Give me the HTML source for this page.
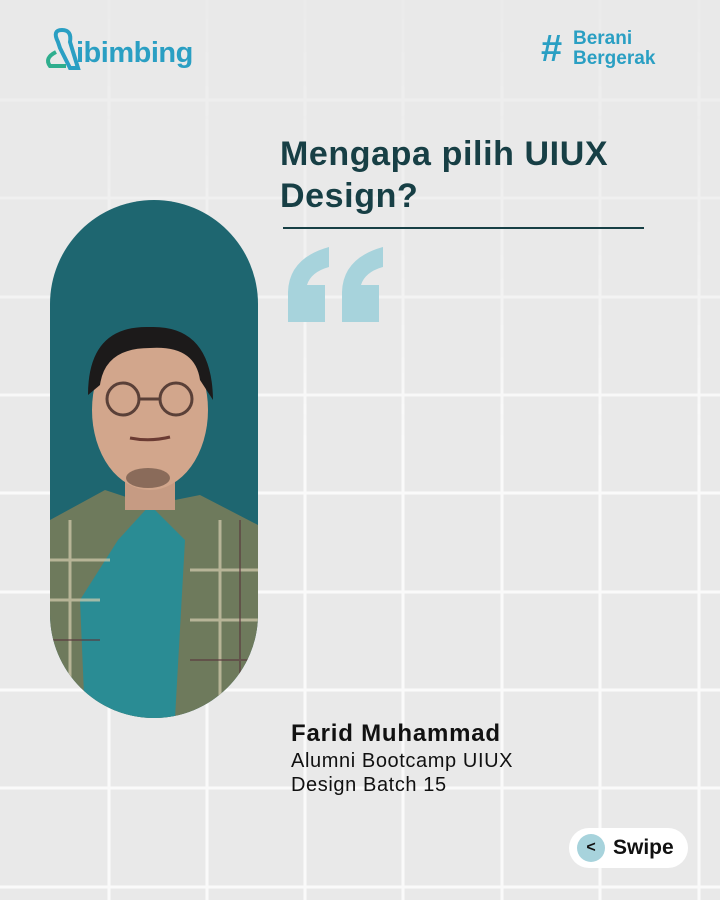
<!DOCTYPE html>
<html><head><meta charset="utf-8"><style>
*{margin:0;padding:0;box-sizing:border-box}
body{width:720px;height:900px;background:#e9e9e9;position:relative;overflow:hidden;font-family:"Liberation Sans",sans-serif}
.abs{position:absolute}
</style></head><body>
<svg class="abs" style="left:0;top:0" width="720" height="900">
<defs><linearGradient id="fade" x1="0" y1="0" x2="0" y2="1"><stop offset="0" stop-color="#fff" stop-opacity="0.15"/><stop offset="0.3" stop-color="#fff" stop-opacity="0.5"/><stop offset="0.5" stop-color="#fff" stop-opacity="1"/></linearGradient>
<mask id="m"><rect width="720" height="900" fill="url(#fade)"/></mask></defs>
<g stroke="#fafafa" stroke-width="3" mask="url(#m)">
<line x1="109" y1="0" x2="109" y2="900"/><line x1="207" y1="0" x2="207" y2="900"/><line x1="305" y1="0" x2="305" y2="900"/><line x1="403" y1="0" x2="403" y2="900"/><line x1="502" y1="0" x2="502" y2="900"/><line x1="600" y1="0" x2="600" y2="900"/><line x1="699" y1="0" x2="699" y2="900"/>
<line x1="0" y1="100" x2="720" y2="100"/><line x1="0" y1="198" x2="720" y2="198"/><line x1="0" y1="297" x2="720" y2="297"/><line x1="0" y1="395" x2="720" y2="395"/><line x1="0" y1="493" x2="720" y2="493"/><line x1="0" y1="592" x2="720" y2="592"/><line x1="0" y1="690" x2="720" y2="690"/><line x1="0" y1="788" x2="720" y2="788"/><line x1="0" y1="887" x2="720" y2="887"/>
</g>
<defs><clipPath id="pc"><rect x="50" y="200" width="208" height="518" rx="104"/></clipPath></defs>
<rect x="50" y="200" width="208" height="518" rx="104" fill="#1e6670"/>
<g clip-path="url(#pc)">
<path d="M50 520 L105 490 L150 505 L200 495 L258 525 L258 718 L50 718Z" fill="#6e7a5c"/>
<path d="M118 540 L150 505 L185 540 L175 718 L85 718 L80 600Z" fill="#2a8c94"/>
<g stroke="#d6cdb0" stroke-width="3" opacity="0.7"><line x1="50" y1="560" x2="110" y2="560"/><line x1="50" y1="600" x2="100" y2="600"/><line x1="190" y1="570" x2="258" y2="570"/><line x1="190" y1="620" x2="258" y2="620"/><line x1="70" y1="520" x2="70" y2="700"/><line x1="220" y1="520" x2="220" y2="700"/></g>
<g stroke="#5a3a3e" stroke-width="2" opacity="0.6"><line x1="50" y1="640" x2="100" y2="640"/><line x1="190" y1="660" x2="258" y2="660"/><line x1="240" y1="520" x2="240" y2="700"/></g>
<rect x="125" y="460" width="50" height="50" fill="#c69b83"/>
<ellipse cx="150" cy="410" rx="58" ry="80" fill="#d2a68c"/>
<path d="M88 395 Q88 325 150 327 Q212 325 213 400 L200 380 Q195 345 150 348 Q105 348 100 385Z" fill="#1c1a1a"/>
<g fill="none" stroke="#5a4038" stroke-width="3"><circle cx="123" cy="399" r="16"/><circle cx="176" cy="399" r="16"/><line x1="139" y1="399" x2="160" y2="399"/></g>
<path d="M130 438 Q150 442 170 437" stroke="#6b3b33" stroke-width="3" fill="none"/>
<ellipse cx="148" cy="478" rx="22" ry="10" fill="#5a4538" opacity="0.6"/>
</g>
<line x1="283" y1="228" x2="644" y2="228" stroke="#173f45" stroke-width="2"/>
<path d="M288 322 V292 Q289 258 329 247 V267 Q311 272 307 285 H325 V322Z M342 322 V292 Q343 258 383 247 V267 Q365 272 361 285 H379 V322Z" fill="#a7d3dc"/>
<path d="M58 42 Q52 30 62 30 Q72 30 70 42 L78 68 L70 68 L60 48Z" fill="none" stroke="#2a9fc3" stroke-width="4"/>
<path d="M56 52 Q44 58 50 66 L66 66" fill="none" stroke="#2fae8e" stroke-width="4"/>
</svg>
<div class="abs" style="left:76px;top:37px;font-size:29px;font-weight:bold;color:#2a9fc3;letter-spacing:-0.5px">ibimbing</div>
<div class="abs" style="left:541px;top:30px;font-size:38px;font-weight:bold;color:#2a9fc3;line-height:38px">#</div>
<div class="abs" style="left:573px;top:29px;font-size:19px;font-weight:bold;color:#2a9fc3;line-height:20px">Berani<br>Bergerak</div>
<div class="abs" style="left:280px;top:133px;font-size:34px;font-weight:bold;color:#173f45;line-height:42px;letter-spacing:0.6px">Mengapa pilih UIUX<br>Design?</div>
<div class="abs" style="left:291px;top:720px;font-size:24px;font-weight:bold;color:#111;letter-spacing:0.8px">Farid Muhammad</div>
<div class="abs" style="left:291px;top:749px;font-size:20px;color:#111;line-height:24px;letter-spacing:0.6px">Alumni Bootcamp UIUX<br>Design Batch 15</div>
<div class="abs" style="left:569px;top:828px;width:119px;height:40px;border-radius:20px;background:#fff"></div>
<div class="abs" style="left:577px;top:834px;width:28px;height:28px;border-radius:50%;background:#a7d3dc;text-align:center;font-weight:bold;font-size:16px;line-height:28px;color:#111">&lt;</div>
<div class="abs" style="left:613px;top:836px;font-size:21px;font-weight:bold;color:#111">Swipe</div>
</body></html>
